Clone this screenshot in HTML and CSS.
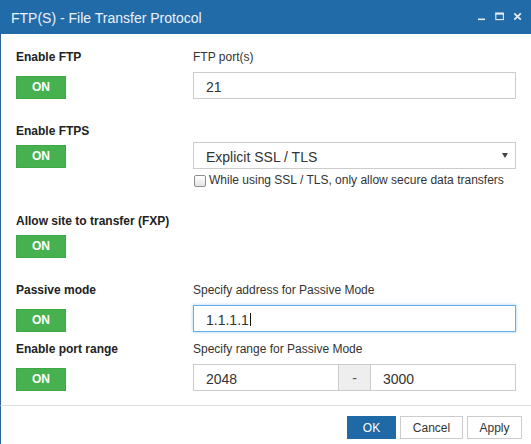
FILE: index.html
```html
<!DOCTYPE html>
<html lang="en">
<head>
<meta charset="utf-8">
<title>FTP(S) - File Transfer Protocol</title>
<link rel="stylesheet" href="styles.css">
</head>
<body>
<div class="dialog">
  <header class="titlebar">
    <span class="title">FTP(S) - File Transfer Protocol</span>
    <div class="win-ctrls">
      <svg class="win-icon" width="10" height="10" viewBox="0 0 10 10"><rect x="2" y="6.5" width="7" height="1.6" fill="#e4ecf5"/></svg>
      <svg class="win-icon" width="10" height="10" viewBox="0 0 10 10"><rect x="1.8" y="1.2" width="7.6" height="6.4" fill="none" stroke="#e4ecf5" stroke-width="1.1"/><rect x="1.3" y="0.7" width="8.6" height="2" fill="#e4ecf5"/></svg>
      <svg class="win-icon" width="10" height="10" viewBox="0 0 10 10"><path d="M2.3 1.3 L8.8 7.6 M8.8 1.3 L2.3 7.6" stroke="#e4ecf5" stroke-width="1.8" fill="none"/></svg>
    </div>
  </header>

  <main class="content">
    <section class="row paired">
      <div class="cell">
        <div class="label strong">Enable FTP</div>
        <div class="switch">ON</div>
      </div>
      <div class="cell">
        <div class="label">FTP port(s)</div>
        <div class="field input"><span>21</span></div>
      </div>
    </section>

    <section class="row">
      <div class="cell">
        <div class="label strong">Enable FTPS</div>
        <div class="switch">ON</div>
      </div>
      <div class="cell offset">
        <div class="field select"><span>Explicit SSL / TLS</span><span class="caret-down"></span></div>
        <div class="check"><span class="box"></span><span>While using SSL / TLS, only allow secure data transfers</span></div>
      </div>
    </section>

    <section class="row">
      <div class="cell">
        <div class="label strong">Allow site to transfer (FXP)</div>
        <div class="switch">ON</div>
      </div>
    </section>

    <section class="row paired">
      <div class="cell">
        <div class="label strong">Passive mode</div>
        <div class="switch">ON</div>
      </div>
      <div class="cell">
        <div class="label">Specify address for Passive Mode</div>
        <div class="field input focused"><span>1.1.1.1</span><span class="text-caret"></span></div>
      </div>
    </section>

    <section class="row paired close">
      <div class="cell">
        <div class="label strong">Enable port range</div>
        <div class="switch">ON</div>
      </div>
      <div class="cell">
        <div class="label">Specify range for Passive Mode</div>
        <div class="group">
          <div class="field input grow"><span>2048</span></div>
          <div class="addon">-</div>
          <div class="field input grow"><span>3000</span></div>
        </div>
      </div>
    </section>
  </main>

  <footer class="footer">
    <button class="btn primary btn-ok">OK</button>
    <button class="btn btn-cancel">Cancel</button>
    <button class="btn btn-apply">Apply</button>
  </footer>
</div>
</body>
</html>
```

FILE: styles.css
```css
* { box-sizing: border-box; }

html, body {
  margin: 0;
  padding: 0;
  background: #ffffff;
}

body {
  font-family: "Liberation Sans", Arial, sans-serif;
  color: #333;
  width: 531px;
  height: 444px;
  overflow: hidden;
}

.dialog {
  width: 531px;
  height: 444px;
  display: flex;
  flex-direction: column;
}

.titlebar {
  height: 34px;
  flex: none;
  background: #226ba9;
  display: flex;
  align-items: center;
  padding: 0 9px 0 11px;
}

.title {
  flex: 1;
  color: #edf2f8;
  font-size: 14px;
  line-height: 32px;
  padding-top: 2px;
}

.win-ctrls {
  display: flex;
  align-items: center;
  gap: 8px;
}

.win-icon { display: block; }

.content {
  flex: none;
  border-left: 1px solid #2f6394;
  padding: 15px 15px 14px 15px;
}

.row {
  display: grid;
  grid-template-columns: 177px 323px;
}

.row + .row { margin-top: 24px; }
.row.close { margin-top: 9px; }

.cell {
  display: flex;
  flex-direction: column;
}

.cell.offset { padding-top: 19px; }

.label {
  font-size: 12px;
  line-height: 17px;
  height: 17px;
  color: #333;
  white-space: nowrap;
}

.label.strong {
  font-weight: bold;
  color: #222;
}

.label + .field,
.label + .group { margin-top: 6px; }

.switch {
  width: 50px;
  height: 23px;
  margin-top: 5px;
  background: #47b14f;
  border: 1px solid #3ea746;
  color: #ffffff;
  font-size: 12px;
  font-weight: bold;
  line-height: 21px;
  text-align: center;
}

.paired .switch { margin-top: auto; }

.field {
  height: 27px;
  border: 1px solid #cccccc;
  background: #ffffff;
  display: flex;
  align-items: center;
  padding: 2px 12px 0 12px;
  font-size: 14px;
  color: #333;
  white-space: nowrap;
}

.field.focused {
  border-color: #66afe9;
  box-shadow: 0 0 3px rgba(102, 175, 233, 0.6);
}

.text-caret {
  display: inline-block;
  width: 1px;
  height: 13px;
  background: #111;
  margin-left: 1px;
  margin-top: -1px;
}

.select {
  padding-right: 7px;
}

.caret-down {
  margin-left: auto;
  width: 0;
  height: 0;
  border-left: 3px solid transparent;
  border-right: 3px solid transparent;
  border-top: 5px solid #444;
  margin-top: -2px;
}

.check {
  margin-top: 3px;
  display: flex;
  align-items: center;
  font-size: 12px;
  line-height: 17px;
  color: #333;
  white-space: nowrap;
}

.check .box {
  width: 12px;
  height: 12px;
  margin-left: 1px;
  margin-right: 3px;
  border: 1px solid #8e8e8e;
  border-radius: 2px;
  background: linear-gradient(#ffffff, #e4e4e4);
}

.group {
  display: flex;
  height: 27px;
}

.group .field { height: 27px; }

.grow { flex: 1; }

.addon {
  width: 31px;
  flex: none;
  background: #eeeeee;
  border-top: 1px solid #cccccc;
  border-bottom: 1px solid #cccccc;
  display: flex;
  align-items: center;
  justify-content: center;
  font-size: 14px;
  color: #555;
  padding-top: 1px;
}

.footer {
  flex: none;
  border-top: 1px solid #dddddd;
  border-left: 1px solid #2f6394;
  display: flex;
  justify-content: flex-end;
  gap: 4px;
  padding: 10px 9px 5px 0;
  flex-grow: 1;
}

.btn {
  height: 23px;
  border: 1px solid #cccccc;
  background: #ffffff;
  color: #333;
  font-family: "Liberation Sans", Arial, sans-serif;
  font-size: 12px;
  padding: 0;
  text-align: center;
  cursor: pointer;
}

.btn.primary {
  background: #1f69a6;
  border-color: #1f69a6;
  color: #ffffff;
}

.btn-ok { width: 49px; }
.btn-cancel { width: 63px; }
.btn-apply { width: 55px; }
```
